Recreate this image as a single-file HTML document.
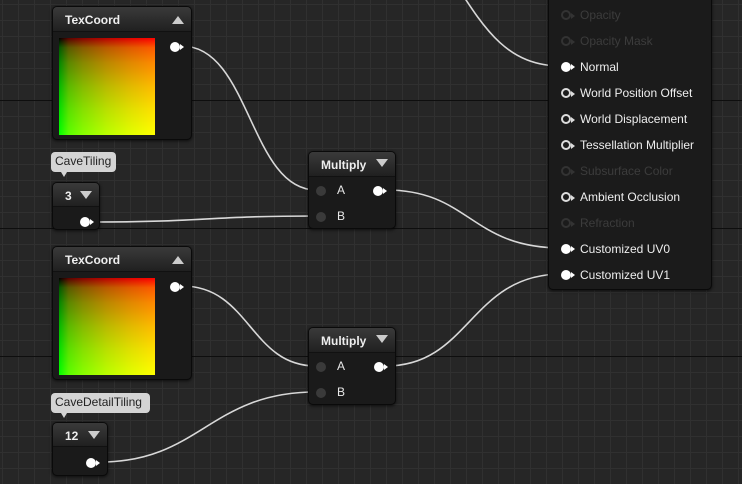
<!DOCTYPE html>
<html><head><meta charset="utf-8"><style>
*{margin:0;padding:0;box-sizing:border-box}
body{width:742px;height:484px;overflow:hidden;background:#262626;position:relative;font-family:"Liberation Sans",sans-serif}
.grid{position:absolute;inset:0;background-image:
linear-gradient(to bottom,#0e0e0e 1px,transparent 1px),
linear-gradient(to right,#303030 1px,transparent 1px),
linear-gradient(to bottom,#303030 1px,transparent 1px);
background-size:742px 128px,16px 16px,16px 16px;
background-position:0 100px,2px 4px,2px 4px}
.node{position:absolute;background:#1a1a1a;border:1px solid #0a0a0a;border-radius:5px;box-shadow:0 1px 3px rgba(0,0,0,.7)}
.hdr{height:25px;background:linear-gradient(#3a3a3a,#202020);border-radius:4px 4px 0 0;color:#eee;font-weight:bold;font-size:12px;padding:6px 0 0 12px;position:relative;border-bottom:1px solid #111}
.tri{position:absolute;right:7px;top:9px;width:0;height:0;border-left:6px solid transparent;border-right:6px solid transparent}
.up{border-bottom:8px solid #ccc}.dn{border-top:8px solid #ccc}
.pv{position:absolute;left:6px;top:31px;width:96px;height:97px;background:linear-gradient(to right,#000 0%,#5a0000 10%,#870000 25%,#ba0000 50%,#e10000 75%,#f00 100%)}
.pv:after{content:"";position:absolute;inset:0;background:linear-gradient(to bottom,#000 0%,#005a00 10%,#008700 25%,#00ba00 50%,#00e100 75%,#0f0 100%);mix-blend-mode:screen}
.pin{position:absolute;width:10px;height:10px;border-radius:50%;background:#fff}
.pin:after{content:"";position:absolute;right:-4px;top:2px;border-left:4px solid #fff;border-top:3px solid transparent;border-bottom:3px solid transparent}
.pin.off{background:#3a3a3a}.pin.off:after{border-left-color:transparent}
.pin.ring{background:transparent;border:2px solid #ddd}
.pin.ring:after{border-left-color:#ddd;right:-6px;top:1px}
.pin.dim{background:transparent;border:2px solid #333}.pin.dim:after{border-left-color:#333;right:-6px;top:1px}
.lbl{position:absolute;color:#e8e8e8;font-size:12px}
.bub{position:absolute;background:#d4d4d4;color:#222;font-size:12px;border-radius:4px;padding:2px 4px;height:20px}
.bub:after{content:"";position:absolute;left:10px;bottom:-5px;border-top:5px solid #d4d4d4;border-left:3px solid transparent;border-right:3px solid transparent}
.row{position:absolute;left:12px;font-size:12px;color:#eee}
.row .pin{left:0;top:2px}
.row span{position:absolute;left:19px;top:0;white-space:nowrap}
.row.g span{color:#3c3c3c}
</style></head><body>
<div class="grid"></div>
<svg width="742" height="484" style="position:absolute;left:0;top:0" fill="none" stroke="#d8d8d8" stroke-width="1.6">
<path d="M182 46 C250 46 250 190 316 190"/>
<path d="M96 222 C200 222 210 216 316 216"/>
<path d="M386 190 C470 190 470 248 562 248"/>
<path d="M182 286 C250 286 250 366 316 366"/>
<path d="M100 462 C200 462 210 392 316 392"/>
<path d="M386 366 C470 366 470 274 562 274"/>
<path d="M440 -40 C480 20 500 66 562 66"/>
</svg>

<div class="node" style="left:52px;top:6px;width:140px;height:134px">
<div class="hdr">TexCoord<div class="tri up"></div></div>
<div class="pv"></div>
<div class="pin" style="left:117px;top:35px"></div>
</div>

<div class="bub" style="left:51px;top:152px;width:65px">CaveTiling</div>
<div class="node" style="left:52px;top:182px;width:48px;height:48px">
<div class="hdr" style="height:24px">3<div class="tri dn" style="top:8px"></div></div>
<div class="pin" style="left:27px;top:34px"></div>
</div>

<div class="node" style="left:308px;top:151px;width:88px;height:78px">
<div class="hdr">Multiply<div class="tri dn" style="top:7px"></div></div>
<div class="pin off" style="left:7px;top:34px"></div><div class="lbl" style="left:28px;top:31px">A</div>
<div class="pin off" style="left:7px;top:60px"></div><div class="lbl" style="left:28px;top:57px">B</div>
<div class="pin" style="left:64px;top:34px"></div>
</div>

<div class="node" style="left:52px;top:246px;width:140px;height:134px">
<div class="hdr">TexCoord<div class="tri up"></div></div>
<div class="pv"></div>
<div class="pin" style="left:117px;top:35px"></div>
</div>

<div class="bub" style="left:51px;top:393px;width:99px">CaveDetailTiling</div>
<div class="node" style="left:52px;top:422px;width:56px;height:54px">
<div class="hdr" style="height:24px">12<div class="tri dn" style="top:8px"></div></div>
<div class="pin" style="left:33px;top:35px"></div>
</div>

<div class="node" style="left:308px;top:327px;width:88px;height:78px">
<div class="hdr">Multiply<div class="tri dn" style="top:7px"></div></div>
<div class="pin off" style="left:7px;top:34px"></div><div class="lbl" style="left:28px;top:31px">A</div>
<div class="pin off" style="left:7px;top:60px"></div><div class="lbl" style="left:28px;top:57px">B</div>
<div class="pin" style="left:65px;top:34px"></div>
</div>

<div class="node" style="left:548px;top:-10px;width:164px;height:300px;background:#1b1b1b">
<div class="row g" style="top:17px"><div class="pin dim"></div><span>Opacity</span></div>
<div class="row g" style="top:43px"><div class="pin dim"></div><span>Opacity Mask</span></div>
<div class="row" style="top:69px"><div class="pin"></div><span>Normal</span></div>
<div class="row" style="top:95px"><div class="pin ring"></div><span>World Position Offset</span></div>
<div class="row" style="top:121px"><div class="pin ring"></div><span>World Displacement</span></div>
<div class="row" style="top:147px"><div class="pin ring"></div><span>Tessellation Multiplier</span></div>
<div class="row g" style="top:173px"><div class="pin dim"></div><span>Subsurface Color</span></div>
<div class="row" style="top:199px"><div class="pin ring"></div><span>Ambient Occlusion</span></div>
<div class="row g" style="top:225px"><div class="pin dim"></div><span>Refraction</span></div>
<div class="row" style="top:251px"><div class="pin"></div><span>Customized UV0</span></div>
<div class="row" style="top:277px"><div class="pin"></div><span>Customized UV1</span></div>
</div>
</body></html>
